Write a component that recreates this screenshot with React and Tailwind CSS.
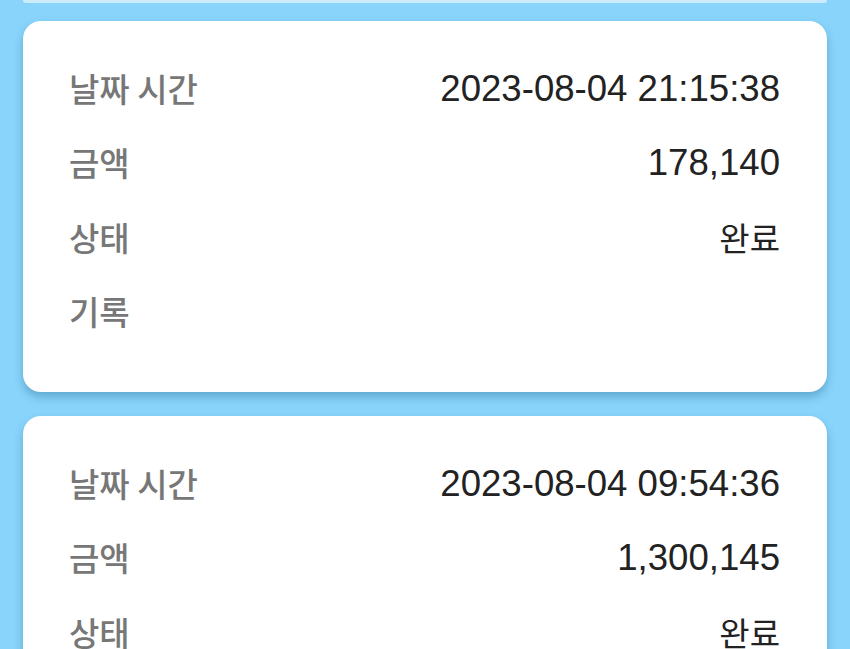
import React from "react";

const cards = [
  { dt: "2023-08-04 21:15:38", amt: "178,140", st: "완료", rec: "" },
  { dt: "2023-08-04 09:54:36", amt: "1,300,145", st: "완료", rec: "" },
];

const labelCls =
  "font-['Noto_Sans_CJK_KR','Noto_Sans',sans-serif] text-[33px] font-medium text-[#777777] leading-none pb-[6px]";
const numCls =
  "font-['Liberation_Sans',Arial,sans-serif] text-[36.6px] text-[#222222] leading-none pb-[4px]";
const korValCls =
  "font-['Noto_Sans_CJK_KR','Noto_Sans',sans-serif] text-[33px] text-[#222222] leading-none pb-[6px]";

function Row({ label, value, kor }) {
  return (
    <div className="flex h-[74.5px] items-center justify-between">
      <span className={labelCls}>{label}</span>
      <span className={kor ? korValCls : numCls}>{value}</span>
    </div>
  );
}

function Card({ c }) {
  return (
    <div className="rounded-[18px] bg-white pl-[46px] pr-[47px] pb-[40px] pt-[33px] shadow-[0_5px_8px_rgba(30,90,130,0.35)]">
      <Row label="날짜 시간" value={c.dt} />
      <Row label="금액" value={c.amt} />
      <Row label="상태" value={c.st} kor />
      <Row label="기록" value={c.rec} />
    </div>
  );
}

export default function App() {
  return (
    <div className="h-[649px] w-[850px] overflow-hidden bg-[#88d4fb] px-[23px]">
      <div className="h-[3px] rounded-b-[18px] bg-[#cbecfc]" />
      <div className="mt-[18px] flex flex-col gap-[24px]">
        {cards.map((c, i) => (
          <Card key={i} c={c} />
        ))}
      </div>
    </div>
  );
}
